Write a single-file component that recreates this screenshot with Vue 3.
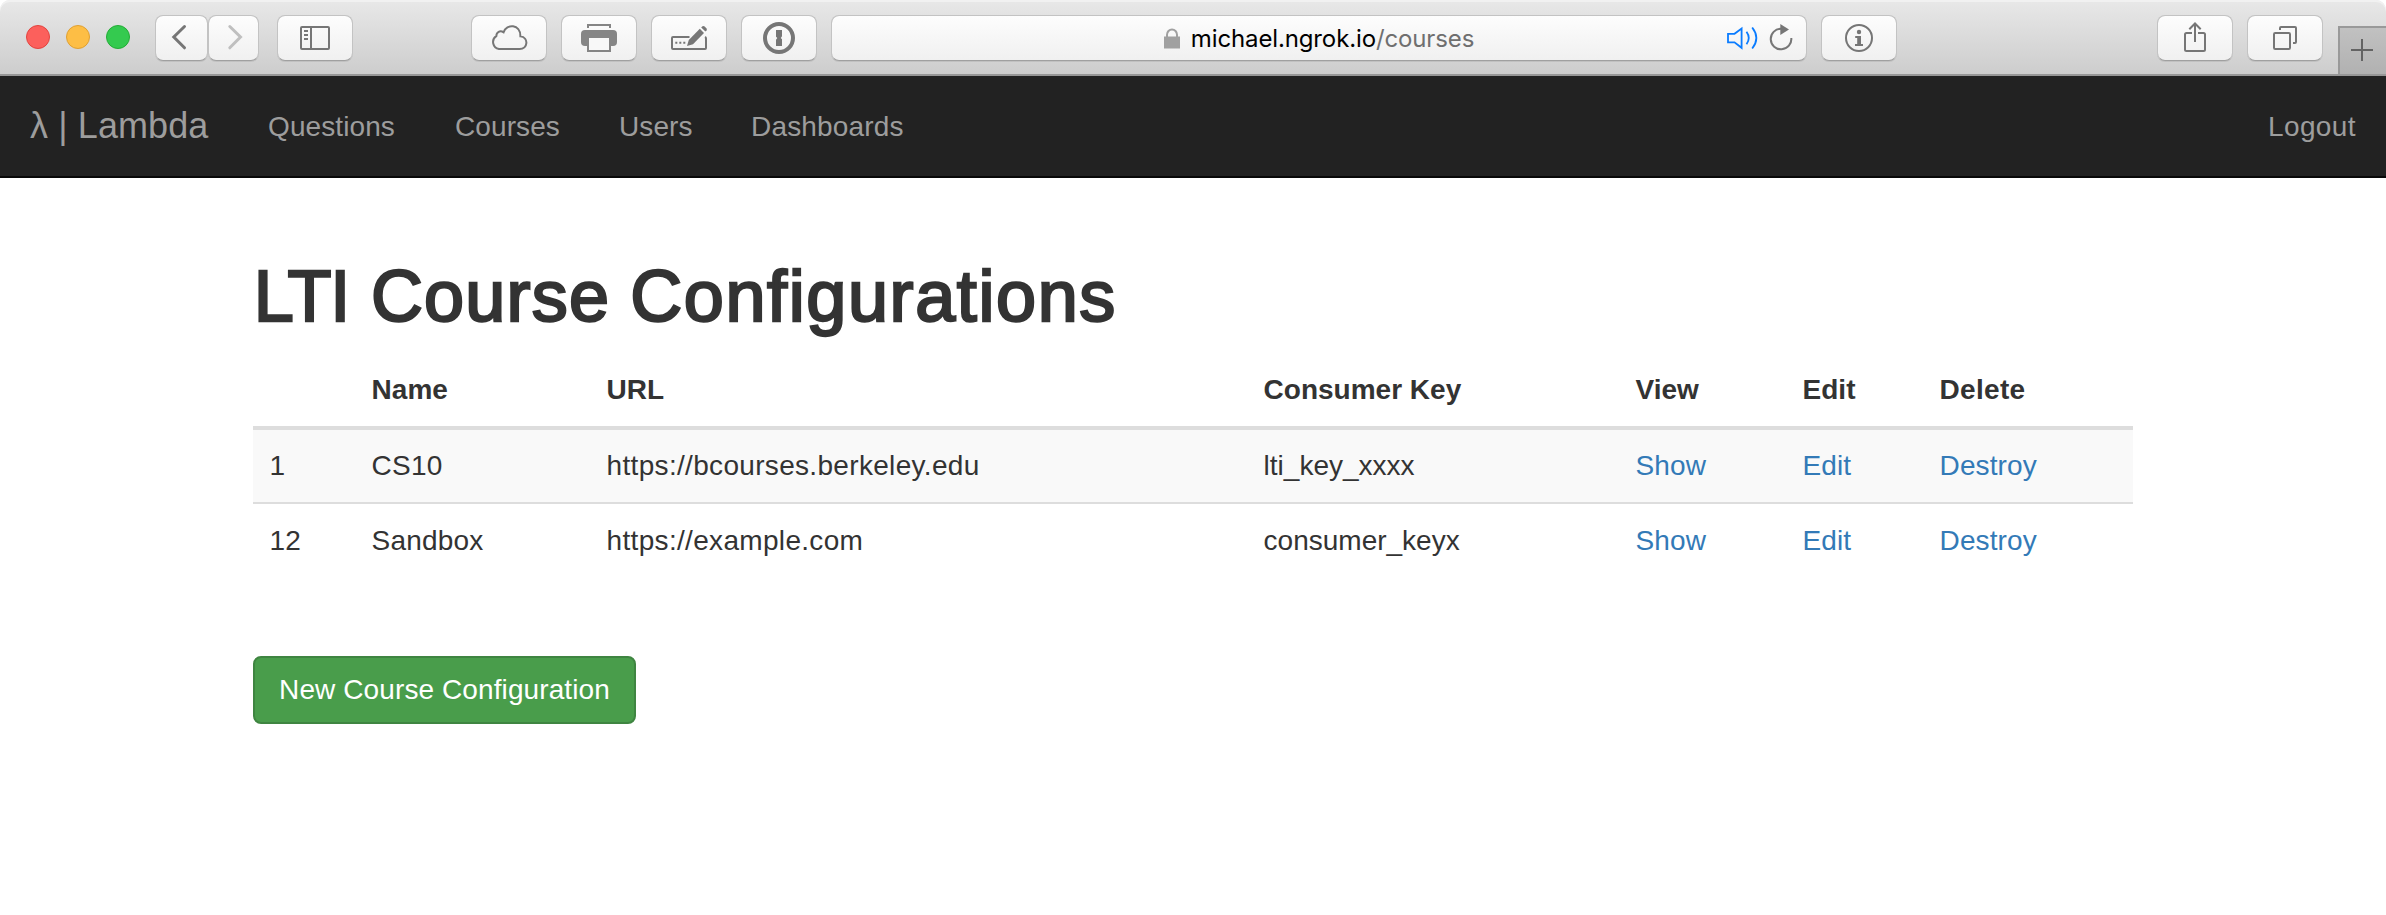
<script setup>
const links = [
  { label: 'Questions', cls: 'questions' },
  { label: 'Courses', cls: 'courses' },
  { label: 'Users', cls: 'users' },
  { label: 'Dashboards', cls: 'dashboards' },
]
const courses = [
  { id: 1, name: 'CS10', url: 'https://bcourses.berkeley.edu', key: 'lti_key_xxxx' },
  { id: 12, name: 'Sandbox', url: 'https://example.com', key: 'consumer_keyx' },
]
</script>

<template>
  <div class="window">
    <header class="toolbar">
      <div class="lights">
        <span class="light red"></span>
        <span class="light yellow"></span>
        <span class="light green"></span>
      </div>
      <div class="history">
        <button class="tool back" aria-label="Back">
          <svg width="51" height="46" viewBox="0 0 51 46"><path d="M28.5 11.5L17.8 22L28.5 32.8" stroke-linecap="round" /></svg>
        </button>
        <button class="tool forward" aria-label="Forward">
          <svg width="49" height="46" viewBox="0 0 49 46"><path d="M20.8 11.5L31.5 22L20.8 32.8" stroke-linecap="round" /></svg>
        </button>
      </div>
      <button class="tool sidebar" aria-label="Sidebar">
        <svg width="74" height="46" viewBox="0 0 74 46">
          <rect x="23" y="12" width="28" height="22" rx="1" />
          <path d="M33 12V34M26 16H30M26 20H30M26 24H30" />
        </svg>
      </button>
      <div class="extensions">
        <button class="tool" aria-label="Cloud">
          <svg width="74" height="46" viewBox="0 0 74 46"><path d="M27 34A7 7 0 0 1 24.3 21.2C24.4 17 28 15 31.6 17.3C34.5 8.5 48.5 8.8 48.4 21.3C57 22.5 56 34 47.5 34Z" /></svg>
        </button>
        <button class="tool" aria-label="Print">
          <svg class="printer" width="74" height="46" viewBox="0 0 74 46">
            <path d="M26 13V10H48V13" />
            <rect class="solid" x="19" y="15" width="36" height="16" rx="4" />
            <rect class="paper" x="26" y="22" width="22" height="14" />
          </svg>
        </button>
        <button class="tool" aria-label="Edit form">
          <svg width="74" height="46" viewBox="0 0 74 46">
            <path d="M37.5 22H21Q20 22 20 23V33Q20 34 21 34H53Q54 34 54 33V23.5Q54 22.5 53 22" />
            <path d="M23.3 27.7H25.3M27.3 27.7H29.3M31.3 27.7H33.3" />
            <path class="solid" d="M35 31L36.8 25L47.8 13.8L52 18L41 29.2Z" />
            <path class="solid" d="M49.2 12.4L50.5 11.2Q51.6 10.6 52.7 11.6L54.3 13.2Q55.3 14.3 54.6 15.3L53.4 16.6Z" />
          </svg>
        </button>
        <button class="tool" aria-label="Password manager">
          <svg width="74" height="46" viewBox="0 0 74 46">
            <circle cx="37" cy="23" r="14" class="ring" />
            <path class="solid" d="M34 15H40V21.2L38.8 23L40 24.2V31H34V24.8L35.3 23L34 21.8Z" />
          </svg>
        </button>
      </div>
      <div class="tool address">
        <span></span>
        <div class="location">
          <svg class="lock" width="17" height="21" viewBox="0 0 17 21">
            <rect class="solid" x="0" y="8.5" width="16" height="12" />
            <path d="M3 9V6.8A5 5.3 0 0 1 13 6.8V9" />
          </svg>
          <span class="host">michael.ngrok.io</span><span class="path">/courses</span>
        </div>
        <svg class="status" width="80" height="46" viewBox="1727 15 80 46">
          <path class="sound" d="M1729 33.8H1735.5L1742.6 28.5V47.8L1735.5 42.3H1729Z" />
          <path class="sound" d="M1747.5 31.8Q1752 38 1747.5 44.3M1753.2 27.5Q1761.5 38 1753.2 48.5" />
          <path d="M1792.3 38A10.3 10.3 0 1 1 1782 28.7" />
          <path class="solid" d="M1781.3 24L1790 29.6L1781.3 35Z" />
        </svg>
      </div>
      <button class="tool info" aria-label="Info">
        <svg width="74" height="46" viewBox="0 0 74 46">
          <circle cx="37" cy="23" r="13" />
          <circle class="solid" cx="37" cy="17" r="2.2" />
          <path class="solid" d="M33.2 21H39V29H41V31H33V29H35.2V23H33.2Z" />
        </svg>
      </button>
      <div class="right-tools">
        <button class="tool" aria-label="Share">
          <svg width="74" height="46" viewBox="0 0 74 46">
            <path d="M34 18H28.5Q27 18 27 19.5V34.5Q27 36 28.5 36H45.5Q47 36 47 34.5V19.5Q47 18 45.5 18H40M37 27V8.5M31.3 14.3L37 8.5L42.7 14.3" />
          </svg>
        </button>
        <button class="tool" aria-label="Show tabs">
          <svg width="74" height="46" viewBox="0 0 74 46">
            <rect x="26" y="18" width="16" height="16" rx="1.2" />
            <path d="M32 15V13Q32 12 33 12H47Q48 12 48 13V27Q48 28 47 28H45" />
          </svg>
        </button>
      </div>
      <button class="new-tab" aria-label="New tab">
        <svg width="22" height="22" viewBox="0 0 22 22"><path d="M0 11H22M11 0V22" /></svg>
      </button>
    </header>

    <nav class="navbar">
      <a class="brand">λ | Lambda</a>
      <a v-for="l in links" :key="l.label" class="nav-link" :class="l.cls">{{ l.label }}</a>
      <a class="nav-link logout">Logout</a>
    </nav>

    <main class="container">
      <h1><span class="w1">LTI</span> <span class="w2">Course</span> <span class="w3">Configurations</span></h1>
      <table>
        <colgroup>
          <col class="c-id" /><col class="c-name" /><col class="c-url" /><col class="c-key" />
          <col class="c-view" /><col class="c-edit" /><col class="c-del" />
        </colgroup>
        <thead>
          <tr>
            <th></th><th>Name</th><th>URL</th><th>Consumer Key</th><th>View</th><th>Edit</th><th>Delete</th>
          </tr>
        </thead>
        <tbody>
          <tr v-for="c in courses" :key="c.id">
            <td>{{ c.id }}</td>
            <td class="name">{{ c.name }}</td>
            <td class="url">{{ c.url }}</td>
            <td>{{ c.key }}</td>
            <td><a>Show</a></td>
            <td><a>Edit</a></td>
            <td><a>Destroy</a></td>
          </tr>
        </tbody>
      </table>
      <button class="create">New Course Configuration</button>
    </main>
  </div>
</template>

<style>
body {
  background: #fff;
}
</style>

<style scoped>
.window {
  height: 915px;
  overflow: hidden;
  font-family: "Liberation Sans", Arial, sans-serif;
  font-size: 28px;
  line-height: 40px;
  color: #333;
}
.window * {
  box-sizing: border-box;
}
.toolbar {
  display: flex;
  align-items: flex-start;
  height: 76px;
  padding-top: 15px;
  border-bottom: 2px solid #979797;
  border-radius: 10px 10px 0 0;
  background: linear-gradient(#e8e8e8, #cdcdcd);
  box-shadow: inset 0 2px 0 #f1f1f1;
}
button {
  margin: 0;
  padding: 0;
  font: inherit;
}
svg {
  display: block;
  flex: none;
  fill: none;
  stroke: #767676;
  stroke-width: 2;
}
.solid {
  fill: #767676;
  stroke: none;
}
.ring { stroke-width: 4; }
.back path, .forward path { stroke-width: 3; }
.forward svg { stroke: #bfbfbf; }
.printer { stroke: #858585; }
.printer .solid { fill: #858585; }
.paper { fill: #f8f8f8; }
.lights {
  display: flex;
  gap: 16px;
  padding: 10px 0 0 26px;
  width: 155px;
}
.light {
  width: 24px;
  height: 24px;
  border-radius: 50%;
  border: 1px solid;
}
.red { background: #fc605c; border-color: #e2443f; }
.yellow { background: #fdbe45; border-color: #dfa033; }
.green { background: #34ca4f; border-color: #24ac36; }
.history {
  display: flex;
  width: 122px;
}
.tool {
  width: 76px;
  height: 46px;
  border: 1px solid #c3c3c3;
  border-bottom-color: #a0a0a0;
  border-radius: 8px;
  background: linear-gradient(#fdfdfd, #f0f0f0);
  background-clip: padding-box;
  box-shadow: 0 1px 0 rgba(0, 0, 0, 0.08);
  flex: none;
}
.tool > svg {
  margin-top: -1px;
}
.back { width: 53px; }
.forward { width: 51px; }
.extensions {
  display: flex;
  gap: 14px;
  margin-left: 118px;
}
.address {
  width: 976px;
  margin-left: 14px;
  display: grid;
  grid-template-columns: 1fr auto 1fr;
  align-items: start;
}
.location {
  display: flex;
  align-items: flex-start;
  height: 44px;
  font-family: Inter, "Open Sans", sans-serif;
  font-size: 24px;
  line-height: 46px;
  letter-spacing: -0.13px;
  color: #000;
}
.lock {
  margin: 12px 10px 0 0;
  stroke: #a0a0a0;
}
.lock .solid { fill: #a0a0a0; }
.path { color: #6f6f6f; }
.status {
  justify-self: end;
}
.sound {
  stroke: #0a7cff;
  stroke-width: 1.8;
}
.info {
  margin-left: 14px;
}
.right-tools {
  display: flex;
  gap: 14px;
  margin-left: 260px;
}
.new-tab {
  display: flex;
  align-items: flex-start;
  width: 48px;
  height: 48px;
  margin: 11px 0 0 auto;
  padding: 11px 0 0 11px;
  border: solid #999;
  border-width: 2px 0 0 2px;
  background: linear-gradient(#c1c1c1, #b1b1b1);
}
.new-tab svg { stroke: #636363; }
.navbar {
  display: flex;
  align-items: center;
  height: 102px;
  padding: 0 30px;
  background: #222;
  border-bottom: 2px solid #080808;
  color: #9d9d9d;
}
.brand {
  width: 238px;
  font-size: 36px;
  letter-spacing: 0.1px;
  white-space: nowrap;
}
.nav-link {
  padding-top: 1px;
  letter-spacing: 0.1px;
  white-space: nowrap;
}
.questions { width: 187px; }
.courses { width: 164px; }
.users { width: 132px; }
.dashboards { letter-spacing: 0.18px; }
.logout { margin-left: auto; letter-spacing: 0.4px; }
.container {
  width: 1880px;
  margin-left: 253px;
}
h1 {
  margin: 0;
  padding: 78px 0 0 0.8px;
  height: 176px;
  font-size: 72px;
  line-height: 80px;
  font-weight: 400;
  -webkit-text-stroke: 2.4px #333;
  white-space: nowrap;
}
.w1 { letter-spacing: -1.1px; margin-right: 1.7px; }
.w2 { letter-spacing: 1.2px; }
.w3 { letter-spacing: 1.6px; }
table {
  width: 1880px;
  table-layout: fixed;
  border-spacing: 0;
  border-collapse: separate;
}
.c-id { width: 102px; }
.c-name { width: 235px; }
.c-url { width: 657px; }
.c-key { width: 372px; }
.c-view { width: 167px; }
.c-edit { width: 137px; }
.c-del { width: 210px; }
th, td {
  padding: 16px 0 16px 16.6px;
  height: 72px;
  text-align: left;
  white-space: nowrap;
}
th {
  height: 76px;
  border-bottom: 4px solid #ddd;
}
th:last-child { letter-spacing: 0.3px; }
tbody tr:first-child td {
  height: 74px;
  background: #f9f9f9;
  border-bottom: 2px solid #ddd;
}
tbody tr:last-child td {
  padding-top: 17px;
  padding-bottom: 15px;
}
td.name { letter-spacing: 0.2px; }
td.url { letter-spacing: 0.32px; }
td a { color: #337ab7; letter-spacing: 0.1px; }
.create {
  display: block;
  margin-top: 80px;
  width: 383px;
  height: 68px;
  border: 2px solid #3f8541;
  border-radius: 8px;
  background: #499d4b;
  color: #fff;
  letter-spacing: 0.1px;
  white-space: nowrap;
}
</style>
